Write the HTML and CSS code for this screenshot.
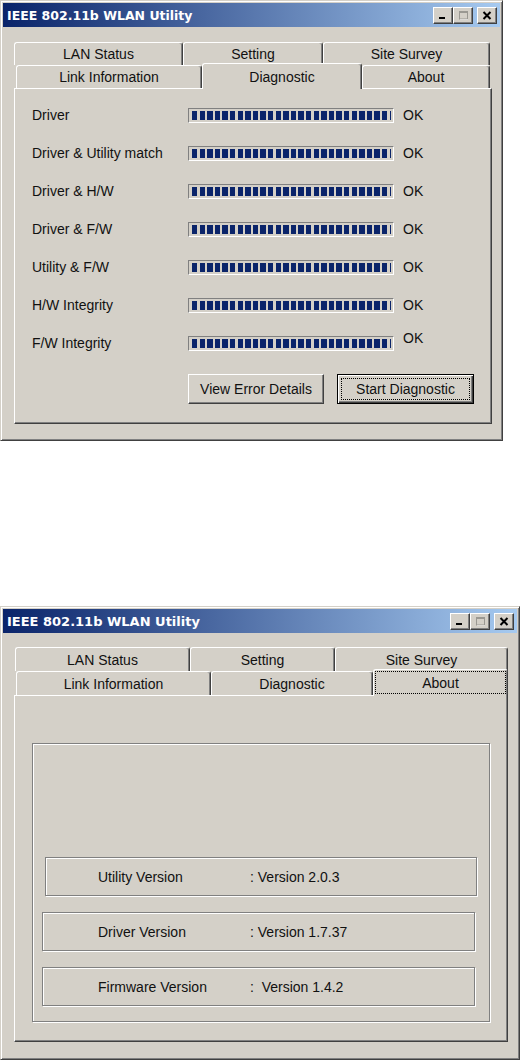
FILE: index.html
```html
<!DOCTYPE html>
<html lang="en">
<head>
    <meta charset="UTF-8">
    <title>IEEE 802.11b WLAN Utility</title>
    <link rel="stylesheet" href="styles.css">
</head>
<body>
    <!-- Diagnostic page -->
    <div class="window win-diag">
        <div class="titlebar">
            <span class="title">IEEE 802.11b WLAN Utility</span>
            <div class="caption-btns">
                <span class="cap-btn"><svg width="10" height="9" viewBox="0 0 10 9"><rect x="1" y="6" width="6" height="2" fill="#000"/></svg></span>
                <span class="cap-btn"><svg width="10" height="9" viewBox="0 0 10 9"><rect x="1.5" y="0.5" width="8" height="7.5" fill="none" stroke="#9a9892"/><rect x="1" y="0" width="9" height="2" fill="#9a9892"/><path d="M2 9 H10.5 V1" fill="none" stroke="#fff"/></svg></span>
                <span class="cap-btn close"><svg width="10" height="9" viewBox="0 0 10 9"><path d="M1.5 1 L8.5 8 M8.5 1 L1.5 8" stroke="#000" stroke-width="2"/></svg></span>
            </div>
        </div>

        <div class="tabs">
            <div class="tab-row">
                <div class="tab t-lan">LAN Status</div>
                <div class="tab t-set">Setting</div>
                <div class="tab t-site">Site Survey</div>
            </div>
            <div class="tab-row front">
                <div class="tab t-link">Link Information</div>
                <div class="tab t-diag active">Diagnostic</div>
                <div class="tab t-about">About</div>
            </div>
        </div>

        <div class="panel">
            <div class="diag">
                <div class="diag-row"><span>Driver</span><div class="bar"><div class="bar-fill"></div></div><span class="ok">OK</span></div>
                <div class="diag-row"><span>Driver &amp; Utility match</span><div class="bar"><div class="bar-fill"></div></div><span class="ok">OK</span></div>
                <div class="diag-row"><span>Driver &amp; H/W</span><div class="bar"><div class="bar-fill"></div></div><span class="ok">OK</span></div>
                <div class="diag-row"><span>Driver &amp; F/W</span><div class="bar"><div class="bar-fill"></div></div><span class="ok">OK</span></div>
                <div class="diag-row"><span>Utility &amp; F/W</span><div class="bar"><div class="bar-fill"></div></div><span class="ok">OK</span></div>
                <div class="diag-row"><span>H/W Integrity</span><div class="bar"><div class="bar-fill"></div></div><span class="ok">OK</span></div>
                <div class="diag-row"><span>F/W Integrity</span><div class="bar"><div class="bar-fill"></div></div><span class="ok high">OK</span></div>

                <div class="actions">
                    <button class="btn">View Error Details</button>
                    <button class="btn default">Start Diagnostic</button>
                </div>
            </div>
        </div>
    </div>

    <!-- About page -->
    <div class="window win-about">
        <div class="titlebar">
            <span class="title">IEEE 802.11b WLAN Utility</span>
            <div class="caption-btns">
                <span class="cap-btn"><svg width="10" height="9" viewBox="0 0 10 9"><rect x="1" y="6" width="6" height="2" fill="#000"/></svg></span>
                <span class="cap-btn"><svg width="10" height="9" viewBox="0 0 10 9"><rect x="1.5" y="0.5" width="8" height="7.5" fill="none" stroke="#9a9892"/><rect x="1" y="0" width="9" height="2" fill="#9a9892"/><path d="M2 9 H10.5 V1" fill="none" stroke="#fff"/></svg></span>
                <span class="cap-btn close"><svg width="10" height="9" viewBox="0 0 10 9"><path d="M1.5 1 L8.5 8 M8.5 1 L1.5 8" stroke="#000" stroke-width="2"/></svg></span>
            </div>
        </div>

        <div class="tabs">
            <div class="tab-row">
                <div class="tab t-lan">LAN Status</div>
                <div class="tab t-set">Setting</div>
                <div class="tab t-site">Site Survey</div>
            </div>
            <div class="tab-row front">
                <div class="tab t-link">Link Information</div>
                <div class="tab t-diag">Diagnostic</div>
                <div class="tab t-about active focus">About</div>
            </div>
        </div>

        <div class="panel">
            <div class="about">
                <div class="group">
                    <div class="ver first"><span class="ver-label">Utility Version</span><span>: Version 2.0.3</span></div>
                    <div class="ver"><span class="ver-label">Driver Version</span><span>: Version 1.7.37</span></div>
                    <div class="ver"><span class="ver-label">Firmware Version</span><span>:&nbsp; Version 1.4.2</span></div>
                </div>
            </div>
        </div>
    </div>
</body>
</html>
```

FILE: styles.css
```css
* {
    margin: 0;
    padding: 0;
    box-sizing: border-box;
}

body {
    background: #fff;
    font-family: "Liberation Sans", Arial, sans-serif;
    font-size: 14px;
    color: #111;
}

/* window frame */
.window {
    background: #d4d0c8;
    border: 1px solid;
    border-color: #d4d0c8 #404040 #404040 #d4d0c8;
    box-shadow: inset 1px 1px 0 #fff, inset -1px -1px 0 #808080;
    padding: 2px;
}

.win-diag {
    width: 503px;
    height: 441px;
}

.win-about {
    width: 520px;
    height: 454px;
    margin-top: 165px;
}

.titlebar {
    height: 24px;
    display: flex;
    align-items: center;
    justify-content: space-between;
    padding: 0 3px 0 4px;
    background: linear-gradient(to right, #0a246a, #a6caf0);
}

.title {
    font-family: "DejaVu Sans", sans-serif;
    font-weight: bold;
    font-size: 12.5px;
    color: #fff;
}

.win-about .title {
    font-size: 13px;
}

.caption-btns {
    display: flex;
}

.cap-btn {
    width: 20px;
    height: 17px;
    background: #d4d0c8;
    border: 1px solid;
    border-color: #fff #404040 #404040 #fff;
    box-shadow: inset -1px -1px 0 #808080;
    display: flex;
    align-items: center;
    justify-content: center;
}

.cap-btn.close {
    margin-left: 4px;
}

/* tabs */
.tabs {
    margin: 15px 0 0 11px;
}

.win-about .tabs {
    margin: 14px 0 0 12px;
}

.tab-row {
    display: flex;
    height: 23px;
}

.win-about .tab-row {
    height: 24px;
}

.tab-row.front {
    padding-left: 2px;
}

.win-about .tab-row.front {
    padding-left: 1px;
}

.tab {
    height: 100%;
    background: #d4d0c8;
    border: 1px solid;
    border-bottom: none;
    border-color: #fff #404040 #fff #fff;
    border-radius: 3px 3px 0 0;
    box-shadow: inset -1px 0 0 #808080;
    display: flex;
    align-items: center;
    justify-content: center;
}

.tab.active {
    position: relative;
    z-index: 2;
    height: calc(100% + 3px);
    margin-top: -2px;
}

.tab.focus {
    outline: 1px dotted #000;
    outline-offset: -3px;
}

.win-diag .t-lan { width: 169px; }
.win-diag .t-set { width: 140px; }
.win-diag .t-site { width: 167px; }
.win-diag .t-link { width: 186px; }
.win-diag .t-diag { width: 160px; }
.win-diag .t-about { width: 128px; }

.win-about .t-lan { width: 175px; }
.win-about .t-set { width: 145px; }
.win-about .t-site { width: 173px; }
.win-about .t-link { width: 195px; }
.win-about .t-diag { width: 162px; }
.win-about .t-about { width: 135px; }

.panel {
    position: relative;
    z-index: 1;
    margin-left: 11px;
    width: 478px;
    height: 336px;
    border: 1px solid;
    border-color: #fff #404040 #404040 #fff;
    box-shadow: inset -1px -1px 0 #808080;
}

.win-about .panel {
    width: 494px;
    height: 347px;
}

/* diagnostic */
.diag {
    padding: 7px 0 0 17px;
}

.diag-row {
    display: grid;
    grid-template-columns: 147px 206px auto;
    column-gap: 9px;
    align-items: center;
    height: 38px;
}

.bar {
    height: 15px;
    border: 1px solid;
    border-color: #808080 #fff #fff #808080;
    padding: 2px 2px 2px 3px;
}

.bar-fill {
    height: 100%;
    background: repeating-linear-gradient(to right, #0a246a 0 5.5px, transparent 5.5px 7.6px);
}

.ok.high {
    margin-bottom: 10px;
}

.actions {
    display: flex;
    gap: 13px;
    margin: 12px 0 0 156px;
}

.btn {
    width: 136px;
    height: 30px;
    background: #d4d0c8;
    border: 1px solid;
    border-color: #fff #404040 #404040 #fff;
    box-shadow: inset -1px -1px 0 #808080;
    font-family: "Liberation Sans", Arial, sans-serif;
    font-size: 14px;
    color: #111;
}

.btn.default {
    width: 137px;
    border-color: #000;
    box-shadow: inset 1px 1px 0 #fff, inset -1px -1px 0 #404040, inset -2px -2px 0 #808080;
    outline: 1px dotted #000;
    outline-offset: -5px;
}

/* about */
.about {
    padding: 47px 0 0 17px;
}

.group {
    width: 458px;
    height: 279px;
    border: 1px solid #808080;
    box-shadow: inset 1px 1px 0 #fff, 1px 1px 0 #fff;
    padding-top: 113px;
    display: flex;
    flex-direction: column;
    gap: 16px;
}

.ver {
    width: 433px;
    height: 39px;
    margin-left: 9px;
    padding-left: 55px;
    border: 1px solid #808080;
    box-shadow: inset 1px 1px 0 #fff, 1px 1px 0 #fff;
    display: flex;
    align-items: center;
}

.ver.first {
    width: 432px;
    margin-left: 12px;
    padding-left: 52px;
}

.ver-label {
    width: 152px;
}
```
